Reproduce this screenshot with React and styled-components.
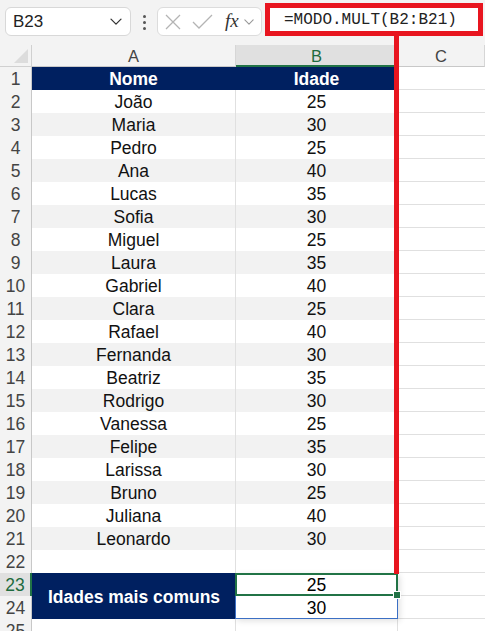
import React from 'react'
import styled, { createGlobalStyle } from 'styled-components'

const GlobalStyle = createGlobalStyle`
  html, body { margin: 0; padding: 0; background: #fff; }
  body { font-family: "Liberation Sans", Arial, sans-serif; }
`

const data = [
  ['João', 25], ['Maria', 30], ['Pedro', 25], ['Ana', 40], ['Lucas', 35],
  ['Sofia', 30], ['Miguel', 25], ['Laura', 35], ['Gabriel', 40], ['Clara', 25],
  ['Rafael', 40], ['Fernanda', 30], ['Beatriz', 35], ['Rodrigo', 30], ['Vanessa', 25],
  ['Felipe', 35], ['Larissa', 30], ['Bruno', 25], ['Juliana', 40], ['Leonardo', 30],
]

function Chevron({ size = 12, color = '#444' }) {
  return (
    <svg width={size} height={size * 0.6} viewBox="0 0 12 7">
      <path d="M1 1l5 5 5-5" fill="none" stroke={color} strokeWidth="1.3" strokeLinecap="round" strokeLinejoin="round" />
    </svg>
  )
}

function App() {
  return (
    <Page>
      <GlobalStyle />
      <Toolbar>
        <NameBox>
          <span>B23</span>
          <Chevron size={12} color="#333" />
        </NameBox>
        <Dots>
          <i /><i /><i />
        </Dots>
        <Tools>
          <svg width="16" height="16" viewBox="0 0 16 16">
            <path d="M1 1l14 14M15 1L1 15" stroke="#b4b4b4" strokeWidth="1.3" fill="none" />
          </svg>
          <svg width="21" height="16" viewBox="0 0 21 16">
            <path d="M1 8l6 6L20 1" stroke="#b4b4b4" strokeWidth="1.3" fill="none" />
          </svg>
          <Fx>fx</Fx>
          <Chevron size={10} color="#999" />
        </Tools>
        <FormulaBox>=MODO.MULT(B2:B21)</FormulaBox>
      </Toolbar>

      <Sheet>
        <Corner />
        <ColHead>A</ColHead>
        <ColHead $active>B</ColHead>
        <ColHead $last>C</ColHead>

        <RowHead>1</RowHead>
        <Cell $head>Nome</Cell>
        <Cell $head>Idade</Cell>
        <Empty />

        {data.map(([name, age], i) => (
          <React.Fragment key={name}>
            <RowHead>{i + 2}</RowHead>
            <Cell $band={i % 2 === 1}>{name}</Cell>
            <Cell $band={i % 2 === 1}>{age}</Cell>
            <Empty />
          </React.Fragment>
        ))}

        <RowHead>22</RowHead>
        <Cell />
        <Cell />
        <Empty />

        <RowHead $active>23</RowHead>
        <Merged>Idades mais comuns</Merged>
        <Spill>
          <Active>
            25
            <Handle />
          </Active>
          <SpillCell>30</SpillCell>
        </Spill>
        <Empty />

        <RowHead>24</RowHead>
        <Empty />

        <RowHead>25</RowHead>
        <Cell />
        <Cell />
        <Empty />
      </Sheet>

      <Pointer />
    </Page>
  )
}

export default App

const Page = styled.div`
  position: relative;
  width: 485px;
  height: 631px;
  overflow: hidden;
  background: #fff;
`
const Toolbar = styled.div`
  display: flex;
  align-items: flex-start;
  height: 45px;
  background: #f3f3f3;
  padding-left: 5px;
  box-sizing: border-box;
`
const NameBox = styled.div`
  margin-top: 7px;
  width: 126px;
  height: 29px;
  box-sizing: border-box;
  border: 1px solid #d8d8d8;
  border-radius: 6px;
  background: #fff;
  display: flex;
  align-items: center;
  justify-content: space-between;
  padding: 1px 8px 0 7px;
  font-size: 17px;
  color: #222;
`
const Dots = styled.div`
  width: 26px;
  height: 44px;
  display: flex;
  flex-direction: column;
  align-items: center;
  justify-content: center;
  gap: 3px;
  i {
    width: 3px;
    height: 3px;
    border-radius: 50%;
    background: #555;
  }
`
const Tools = styled.div`
  margin-top: 7px;
  width: 105px;
  height: 29px;
  box-sizing: border-box;
  border: 1px solid #dcdcdc;
  border-radius: 6px;
  background: #fff;
  display: flex;
  align-items: center;
  padding-left: 7px;
  gap: 11px;
`
const Fx = styled.span`
  font-family: "Liberation Serif", "Times New Roman", serif;
  font-style: italic;
  font-size: 19px;
  color: #333;
  margin-left: 1px;
  margin-right: -6px;
  padding-bottom: 2px;
`
const FormulaBox = styled.div`
  margin-top: 3px;
  margin-left: 3px;
  width: 218px;
  height: 33px;
  box-sizing: border-box;
  border: 5px solid #e8151f;
  background: #fff;
  font-family: "Liberation Mono", "Courier New", monospace;
  font-size: 16px;
  color: #222;
  display: flex;
  align-items: center;
  padding: 1px 0 0 14px;
`
const Sheet = styled.div`
  display: grid;
  grid-template-columns: 32px 204px 162px 1fr;
  grid-template-rows: 22px repeat(25, 23px);
  font-size: 17.5px;
`
const Corner = styled.div`
  background: #f3f3f3;
  border-right: 1px solid #d0d0d0;
  border-bottom: 1px solid #d0d0d0;
  position: relative;
  &::after {
    content: '';
    position: absolute;
    right: 3px;
    bottom: 3px;
    border-style: solid;
    border-width: 0 0 14px 14px;
    border-color: transparent transparent #dcdcdc transparent;
  }
`
const ColHead = styled.div`
  display: flex;
  align-items: center;
  justify-content: center;
  padding-top: 2px;
  font-size: 16.5px;
  background: ${p => (p.$active ? '#e0e0e0' : '#f3f3f3')};
  color: ${p => (p.$active ? '#1e6b3e' : '#444')};
  border-right: 1px solid #d6d6d6;
  border-bottom: ${p => (p.$active ? '2px solid #217346' : '1px solid #c8c8c8')};
  box-sizing: border-box;
`
const RowHead = styled.div`
  display: flex;
  align-items: center;
  justify-content: center;
  padding-top: 2px;
  font-size: 17.5px;
  background: ${p => (p.$active ? '#e0e0e0' : '#f3f3f3')};
  color: ${p => (p.$active ? '#1e6b3e' : '#444')};
  border-right: ${p => (p.$active ? '2px solid #217346' : '1px solid #c8c8c8')};
  box-sizing: border-box;
`
const Cell = styled.div`
  display: flex;
  align-items: center;
  justify-content: center;
  padding-top: 2px;
  color: ${p => (p.$head ? '#fff' : '#111')};
  font-weight: ${p => (p.$head ? 700 : 400)};
  background: ${p => (p.$head ? '#002060' : p.$band ? '#f2f2f2' : '#fff')};
  border-right: 1px solid ${p => (p.$head ? '#002060' : '#e0e0e0')};
  box-sizing: border-box;
`
const Empty = styled.div`
  border-bottom: 1px solid #e0e0e0;
  box-sizing: border-box;
`
const Merged = styled.div`
  grid-row: span 2;
  display: flex;
  align-items: center;
  justify-content: center;
  padding-top: 2px;
  background: #002060;
  color: #fff;
  font-weight: 700;
`
const Spill = styled.div`
  grid-row: span 2;
  display: grid;
  grid-template-rows: 23px 23px;
  border: 1px solid #3b6fc4;
  border-top: none;
  border-left: none;
  margin-left: -1px;
  box-sizing: border-box;
  position: relative;
  box-shadow: 2px 2px 6px rgba(0, 0, 0, 0.12);
`
const Active = styled.div`
  position: relative;
  display: flex;
  align-items: center;
  justify-content: center;
  padding-top: 2px;
  border: 2px solid #217346;
  margin-right: -1px;
  box-sizing: border-box;
`
const SpillCell = styled.div`
  display: flex;
  align-items: center;
  justify-content: center;
  padding-top: 2px;
  border-left: 1px solid #3b6fc4;
`
const Handle = styled.span`
  position: absolute;
  right: -5px;
  bottom: -5px;
  width: 6px;
  height: 6px;
  background: #217346;
  border: 1px solid #fff;
`
const Pointer = styled.div`
  position: absolute;
  left: 394px;
  top: 36px;
  width: 5px;
  height: 538px;
  background: #e8151f;
`
